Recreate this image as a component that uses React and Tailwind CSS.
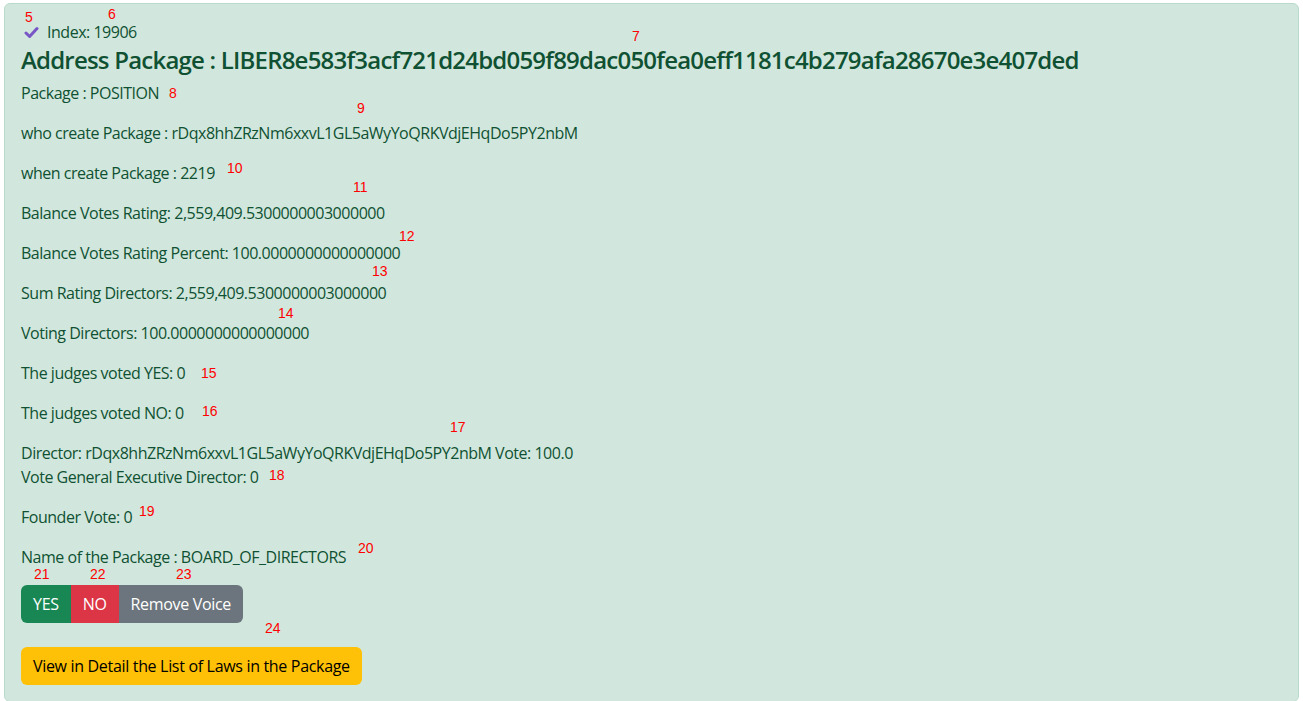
import React from 'react';

const MARKS = [
  { n: '5', cls: 'left-[25px] top-[10px]' },
  { n: '6', cls: 'left-[108px] top-[7px]' },
  { n: '7', cls: 'left-[632px] top-[29px]' },
  { n: '8', cls: 'left-[169px] top-[86px]' },
  { n: '9', cls: 'left-[357px] top-[101px]' },
  { n: '10', cls: 'left-[227px] top-[161px]' },
  { n: '11', cls: 'left-[353px] top-[180px]' },
  { n: '12', cls: 'left-[399px] top-[229px]' },
  { n: '13', cls: 'left-[372px] top-[264px]' },
  { n: '14', cls: 'left-[278px] top-[306px]' },
  { n: '15', cls: 'left-[201px] top-[366px]' },
  { n: '16', cls: 'left-[202px] top-[404px]' },
  { n: '17', cls: 'left-[450px] top-[420px]' },
  { n: '18', cls: 'left-[269px] top-[468px]' },
  { n: '19', cls: 'left-[139px] top-[504px]' },
  { n: '20', cls: 'left-[358px] top-[541px]' },
  { n: '21', cls: 'left-[34px] top-[567px]' },
  { n: '22', cls: 'left-[90px] top-[567px]' },
  { n: '23', cls: 'left-[176px] top-[567px]' },
  { n: '24', cls: 'left-[265px] top-[621px]' },
];

const ROWS = [
  'Package : POSITION',
  'who create Package : rDqx8hhZRzNm6xxvL1GL5aWyYoQRKVdjEHqDo5PY2nbM',
  'when create Package : 2219',
  'Balance Votes Rating: 2,559,409.5300000003000000',
  'Balance Votes Rating Percent: 100.0000000000000000',
  'Sum Rating Directors: 2,559,409.5300000003000000',
  'Voting Directors: 100.0000000000000000',
  'The judges voted YES: 0',
  'The judges voted NO: 0',
];

export default function App() {
  return (
    <div className="relative px-1 pt-[3px] font-['Open_Sans',sans-serif] text-[16px] leading-6">
      {/* package card */}
      <div className="rounded-md border border-[#badbcc] bg-[#d1e7dd] p-4 tracking-[-0.03em] text-[#0f5132]">
        <div className="flex items-center gap-2 pl-[3px]">
          <svg width="15" height="13" viewBox="0 0 15 13" fill="none">
            <path d="M2 7L5.6 10.5L13 2.5" stroke="#7856c6" strokeWidth="3" strokeLinecap="round" strokeLinejoin="round" />
          </svg>
          <span>Index: 19906</span>
        </div>
        <h4 className="mb-[6px] pt-[2px] text-[24px] font-semibold leading-[1.2] tracking-[-0.033em]">
          Address Package : LIBER8e583f3acf721d24bd059f89dac050fea0eff1181c4b279afa28670e3e407ded
        </h4>

        {ROWS.map((r) => (
          <p key={r} className="mb-4">{r}</p>
        ))}

        <p className="mb-4">
          Director: rDqx8hhZRzNm6xxvL1GL5aWyYoQRKVdjEHqDo5PY2nbM Vote: 100.0
          <br />
          Vote General Executive Director: 0
        </p>
        <p className="mb-4">Founder Vote: 0</p>
        <p className="mb-4">Name of the Package : BOARD_OF_DIRECTORS</p>

        <div className="flex tracking-[-0.02em]">
          <button className="h-[38px] rounded-l-md bg-[#198754] px-3 text-white">YES</button>
          <button className="h-[38px] bg-[#dc3545] px-3 text-white">NO</button>
          <button className="h-[38px] rounded-r-md bg-[#6c757d] px-3 text-white">Remove Voice</button>
        </div>

        <button className="mt-6 h-[38px] rounded-md bg-[#ffc107] px-3 tracking-[-0.02em] text-black">
          View in Detail the List of Laws in the Package
        </button>
      </div>

      {/* red annotation numbers */}
      {MARKS.map(({ n, cls }) => (
        <span key={n} className={`absolute ${cls} font-['Liberation_Sans',sans-serif] text-[14px] leading-none text-[#ff0000]`}>
          {n}
        </span>
      ))}
    </div>
  );
}
